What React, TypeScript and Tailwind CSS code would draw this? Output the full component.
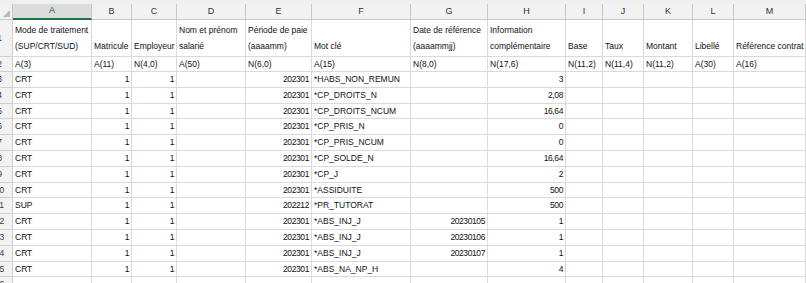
import React from "react";

const letters = ["A", "B", "C", "D", "E", "F", "G", "H", "I", "J", "K", "L", "M"];

type Row = (string | null)[];

// columns: A..M ; right-aligned columns: B,C,E,G,H
const rightCols = new Set([1, 2, 4, 6, 7]);

const data: Row[] = [
  ["CRT", "1", "1", "", "202301", "*HABS_NON_REMUN", "", "3", "", "", "", "", ""],
  ["CRT", "1", "1", "", "202301", "*CP_DROITS_N", "", "2,08", "", "", "", "", ""],
  ["CRT", "1", "1", "", "202301", "*CP_DROITS_NCUM", "", "16,64", "", "", "", "", ""],
  ["CRT", "1", "1", "", "202301", "*CP_PRIS_N", "", "0", "", "", "", "", ""],
  ["CRT", "1", "1", "", "202301", "*CP_PRIS_NCUM", "", "0", "", "", "", "", ""],
  ["CRT", "1", "1", "", "202301", "*CP_SOLDE_N", "", "16,64", "", "", "", "", ""],
  ["CRT", "1", "1", "", "202301", "*CP_J", "", "2", "", "", "", "", ""],
  ["CRT", "1", "1", "", "202301", "*ASSIDUITE", "", "500", "", "", "", "", ""],
  ["SUP", "1", "1", "", "202212", "*PR_TUTORAT", "", "500", "", "", "", "", ""],
  ["CRT", "1", "1", "", "202301", "*ABS_INJ_J", "20230105", "1", "", "", "", "", ""],
  ["CRT", "1", "1", "", "202301", "*ABS_INJ_J", "20230106", "1", "", "", "", "", ""],
  ["CRT", "1", "1", "", "202301", "*ABS_INJ_J", "20230107", "1", "", "", "", "", ""],
  ["CRT", "1", "1", "", "202301", "*ABS_NA_NP_H", "", "4", "", "", "", "", ""],
];

const header1: string[][] = [
  ["Mode de traitement", "(SUP/CRT/SUD)"],
  ["Matricule"],
  ["Employeur"],
  ["Nom et prénom", "salarié"],
  ["Période de paie", "(aaaamm)"],
  ["Mot clé"],
  ["Date de référence", "(aaaammjj)"],
  ["Information", "complémentaire"],
  ["Base"],
  ["Taux"],
  ["Montant"],
  ["Libellé"],
  ["Référence contrat"],
];

const header2 = ["A(3)", "A(11)", "N(4,0)", "A(50)", "N(6,0)", "A(15)", "N(8,0)", "N(17,6)", "N(11,2)", "N(11,4)", "N(11,2)", "A(30)", "A(16)"];

const gridCols =
  "grid grid-cols-[13px_79px_40px_45px_69px_66px_99px_77px_78px_37px_41px_49px_41px_72px]";

function RowHead({ n, h }: { n: string; h: string }) {
  return (
    <div className={`${h} overflow-hidden bg-[#f2f2f2] border-r border-b border-[#d0d0d0] flex items-center`}>
      <div className="w-[25px] shrink-0 ml-[-13px] text-center text-[#3a3a3a]">{n}</div>
    </div>
  );
}

export default function App() {
  return (
    <div
      className="w-[806px] h-[283px] overflow-hidden bg-white text-[8.5px] text-[#111]"
      style={{ fontFamily: "'Liberation Sans', Arial, sans-serif" }}
    >
      <div className="h-[4px] bg-[#f0f0f0]" />
      {/* column letters */}
      <div className={`${gridCols} h-[16px] bg-[#f2f2f2]`}>
        <div className="relative border-r border-b border-[#c8c8c8] bg-[#f2f2f2]">
          <div className="absolute right-[2px] bottom-[2px] w-0 h-0 border-l-[7px] border-l-transparent border-b-[7px] border-b-[#b8b8b8]" />
        </div>
        {letters.map((l, i) => (
          <div
            key={l}
            className={
              i === 0
                ? "flex items-center justify-center border-r border-[#c8c8c8] border-b-2 border-b-[#217346] bg-[#dcdcdc] text-[#1f5f3a] text-[9px]"
                : "flex items-center justify-center border-r border-b border-[#c8c8c8] text-[#333] text-[9px]"
            }
          >
            {l}
          </div>
        ))}
      </div>
      {/* row 1 */}
      <div className={`${gridCols} h-[37px]`}>
        <RowHead n="1" h="h-[37px]" />
        {header1.map((lines, i) => (
          <div
            key={i}
            className="flex flex-col justify-end pb-[2px] pl-[2px] border-r border-b border-[#dadada] leading-[16px] whitespace-nowrap overflow-visible"
          >
            {lines.map((t, j) => (
              <div key={j}>{t}</div>
            ))}
          </div>
        ))}
      </div>
      {/* row 2 */}
      <div className={`${gridCols} h-[15px]`}>
        <RowHead n="2" h="h-[15px]" />
        {header2.map((t, i) => (
          <div key={i} className="flex items-center pl-[2px] border-r border-b border-[#dadada] whitespace-nowrap">
            {t}
          </div>
        ))}
      </div>
      {/* data rows */}
      {data.map((row, r) => (
        <div key={r} className={`${gridCols} h-[15.8px]`}>
          <RowHead n={String(r + 3)} h="h-[15.8px]" />
          {row.map((v, c) => (
            <div
              key={c}
              className={`flex items-center border-r border-b border-[#dadada] whitespace-nowrap ${
                rightCols.has(c) ? "justify-end pr-[2px] tracking-[-0.4px]" : "pl-[2px]"
              }`}
            >
              {v}
            </div>
          ))}
        </div>
      ))}
      {/* partial next row */}
      <div className={`${gridCols} h-[16px]`}>
        <RowHead n="16" h="h-[16px]" />
        {letters.map((l) => (
          <div key={l} className="border-r border-b border-[#dadada]" />
        ))}
      </div>
    </div>
  );
}
